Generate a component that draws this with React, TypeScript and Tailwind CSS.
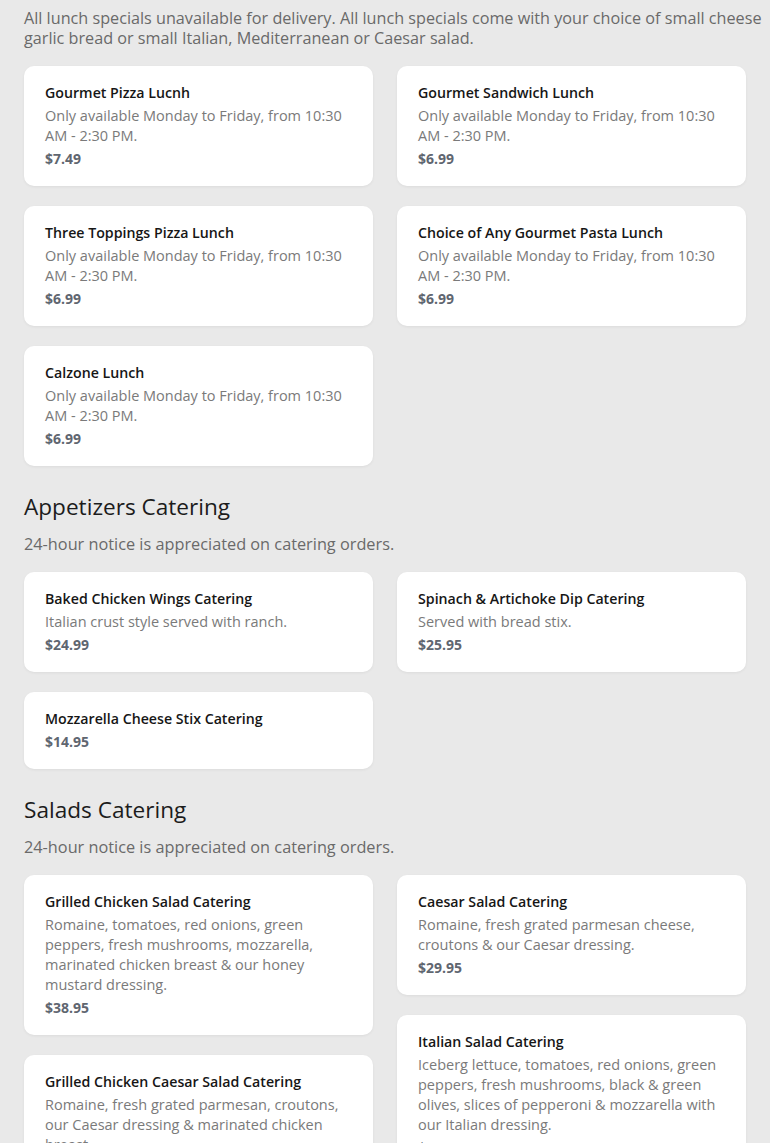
type Item = {
  name: string;
  desc?: string;
  price: string;
};

const lunchLeft: Item[] = [
  { name: "Gourmet Pizza Lucnh", desc: "Only available Monday to Friday, from 10:30 AM - 2:30 PM.", price: "$7.49" },
  { name: "Three Toppings Pizza Lunch", desc: "Only available Monday to Friday, from 10:30 AM - 2:30 PM.", price: "$6.99" },
  { name: "Calzone Lunch", desc: "Only available Monday to Friday, from 10:30 AM - 2:30 PM.", price: "$6.99" },
];

const lunchRight: Item[] = [
  { name: "Gourmet Sandwich Lunch", desc: "Only available Monday to Friday, from 10:30 AM - 2:30 PM.", price: "$6.99" },
  { name: "Choice of Any Gourmet Pasta Lunch", desc: "Only available Monday to Friday, from 10:30 AM - 2:30 PM.", price: "$6.99" },
];

const appLeft: Item[] = [
  { name: "Baked Chicken Wings Catering", desc: "Italian crust style served with ranch.", price: "$24.99" },
  { name: "Mozzarella Cheese Stix Catering", price: "$14.95" },
];

const appRight: Item[] = [
  { name: "Spinach & Artichoke Dip Catering", desc: "Served with bread stix.", price: "$25.95" },
];

const saladLeft: Item[] = [
  {
    name: "Grilled Chicken Salad Catering",
    desc: "Romaine, tomatoes, red onions, green peppers, fresh mushrooms, mozzarella, marinated chicken breast & our honey mustard dressing.",
    price: "$38.95",
  },
  {
    name: "Grilled Chicken Caesar Salad Catering",
    desc: "Romaine, fresh grated parmesan, croutons, our Caesar dressing & marinated chicken breast.",
    price: "$42.95",
  },
];

const saladRight: Item[] = [
  {
    name: "Caesar Salad Catering",
    desc: "Romaine, fresh grated parmesan cheese, croutons & our Caesar dressing.",
    price: "$29.95",
  },
  {
    name: "Italian Salad Catering",
    desc: "Iceberg lettuce, tomatoes, red onions, green peppers, fresh mushrooms, black & green olives, slices of pepperoni & mozzarella with our Italian dressing.",
    price: "$34.95",
  },
];

function Card({ item }: { item: Item }) {
  return (
    <div className="bg-white rounded-[10px] shadow-[0_1px_3px_rgba(0,0,0,0.06)] pt-[17px] pb-[17px] px-[21px] flex flex-col gap-[3px]">
      <div className="text-[14.2px] leading-5 font-semibold text-[#161616]">
        {item.name}
      </div>
      {item.desc && (
        <div className="text-[14.5px] leading-5 text-[#7a7a7a]">
          {item.desc}
        </div>
      )}
      <div className="text-[14px] leading-5 font-bold text-[#5f6670]">
        {item.price}
      </div>
    </div>
  );
}

function Columns({ left, right }: { left: Item[]; right: Item[] }) {
  return (
    <div className="grid grid-cols-2 gap-6 items-start">
      <div className="flex flex-col gap-5">
        {left.map((it) => (
          <Card key={it.name} item={it} />
        ))}
      </div>
      <div className="flex flex-col gap-5">
        {right.map((it) => (
          <Card key={it.name} item={it} />
        ))}
      </div>
    </div>
  );
}

function Section({
  title,
  note,
  left,
  right,
}: {
  title: string;
  note: string;
  left: Item[];
  right: Item[];
}) {
  return (
    <section className="mt-[26px]">
      <h2 className="text-[22.6px] leading-[30px] text-[#1c1c1c]">
        {title}
      </h2>
      <p className="mt-[12px] text-[16.3px] leading-5 text-[#6a6a6a]">
        {note}
      </p>
      <div className="mt-[18px]">
        <Columns left={left} right={right} />
      </div>
    </section>
  );
}

export default function App() {
  return (
    <main
      className="min-h-screen bg-[#e9e9e9] pl-6 pr-6 pt-[8px] pb-10 overflow-hidden"
      style={{ fontFamily: '"Open Sans", sans-serif' }}
    >
      <p className="w-[746px] text-[16.2px] leading-5 text-[#6a6a6a]">
        All lunch specials unavailable for delivery. All lunch specials come
        with your choice of small cheese garlic bread or small Italian,
        Mediterranean or Caesar salad.
      </p>

      <div className="mt-[18px]">
        <Columns left={lunchLeft} right={lunchRight} />
      </div>

      <Section
        title="Appetizers Catering"
        note="24-hour notice is appreciated on catering orders."
        left={appLeft}
        right={appRight}
      />

      <Section
        title="Salads Catering"
        note="24-hour notice is appreciated on catering orders."
        left={saladLeft}
        right={saladRight}
      />
    </main>
  );
}
